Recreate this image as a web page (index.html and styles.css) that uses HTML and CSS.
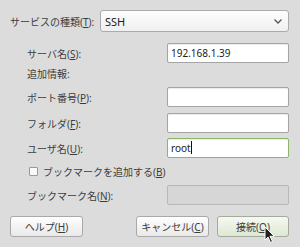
FILE: index.html
```html
<!DOCTYPE html>
<html lang="ja">
<head>
  <meta charset="UTF-8" />
  <title>サーバへ接続</title>
  <link rel="stylesheet" href="styles.css">
</head>
<body>
  <div class="dialog">
    <div class="row-type">
      <label class="type-label">サービスの種類(<u>T</u>):</label>
      <div class="combo">
        <span>SSH</span>
        <svg class="chevron" width="8" height="5" viewBox="0 0 8 5"><polyline points="0.5,0.5 4,4 7.5,0.5" fill="none" stroke="#555" stroke-width="1.3"/></svg>
      </div>
    </div>

    <div class="row row-server">
      <label>サーバ名(<u>S</u>):</label>
      <div class="entry">192.168.1.39</div>
    </div>

    <div class="row row-info">
      <label>追加情報:</label>
    </div>

    <div class="row row-port">
      <label>ポート番号(<u>P</u>):</label>
      <div class="entry"></div>
    </div>

    <div class="row row-folder">
      <label>フォルダ(<u>F</u>):</label>
      <div class="entry"></div>
    </div>

    <div class="row row-user">
      <label>ユーザ名(<u>U</u>):</label>
      <div class="entry focus">root<span class="caret"></span></div>
    </div>

    <div class="row row-check">
      <span class="checkbox"></span>
      <label>ブックマークを追加する(<u>B</u>)</label>
    </div>

    <div class="row row-bookmark">
      <label>ブックマーク名(<u>N</u>):</label>
      <div class="entry disabled"></div>
    </div>

    <div class="buttons">
      <button class="btn">ヘルプ(<u>H</u>)</button>
      <div class="spacer"></div>
      <button class="btn">キャンセル(<u>C</u>)</button>
      <button class="btn primary">接続(<u>O</u>)</button>
    </div>

    <svg class="pointer" width="12" height="18" viewBox="0 0 12 18">
      <path d="M1 1 L1 14 L4 11 L6.5 16.5 L8.5 15.5 L6 10.3 L10.3 10.3 Z" fill="#222" stroke="#fff" stroke-width="1" stroke-linejoin="round"/>
    </svg>
  </div>
</body>
</html>
```

FILE: styles.css
```css
body {
  margin: 0;
  background: #dcdcdc;
  font-family: "Noto Sans", "Noto Sans CJK JP", sans-serif;
  font-size: 10px;
  color: #3c3c3c;
}

u {
  text-decoration: underline;
  text-underline-offset: 1px;
}

.dialog {
  position: relative;
  width: 300px;
  height: 247px;
  box-sizing: border-box;
  padding: 10px 11px 0 10px;
}

.row-type {
  display: flex;
  align-items: center;
  height: 22px;
}

.type-label {
  width: 90px;
}

.combo {
  flex: 1;
  height: 22px;
  box-sizing: border-box;
  border: 1px solid #ababab;
  border-radius: 3px;
  background: linear-gradient(#fdfdfd, #f0f0f0);
  display: flex;
  align-items: center;
  justify-content: space-between;
  padding: 0 6px 0 4px;
  font-size: 11px;
  color: #222;
}

.chevron {
  margin-top: 1px;
}

.row {
  display: flex;
  align-items: center;
  padding-left: 17px;
  height: 20px;
}

.row label {
  width: 140px;
}

.row-server { margin-top: 11px; }
.row-info { margin-top: 2px; height: 16px; }
.row-port { margin-top: 6px; }
.row-folder { margin-top: 6px; }
.row-user { margin-top: 5px; }
.row-check { margin-top: 5px; height: 16px; padding-left: 19px; }
.row-bookmark { margin-top: 6px; }

.entry {
  width: 122px;
  height: 20px;
  box-sizing: border-box;
  border: 1px solid #a4a4a4;
  border-radius: 2px;
  background: #fff;
  box-shadow: inset 0 1px 1px rgba(0, 0, 0, 0.08);
  padding: 0 3px;
  line-height: 18px;
  color: #222;
}

.entry.focus {
  border-color: #8db56a;
}

.caret {
  display: inline-block;
  width: 1px;
  height: 13px;
  background: #111;
  vertical-align: -2px;
}

.entry.disabled {
  background: #d6d6d6;
  border-color: #b8b8b8;
  box-shadow: none;
}

.checkbox {
  width: 7px;
  height: 7px;
  border: 1px solid #9a9a9a;
  border-radius: 1px;
  background: #fafafa;
  margin-right: 5px;
}

.row-check label {
  width: auto;
}

.buttons {
  display: flex;
  margin-top: 11px;
  height: 21px;
}

.spacer {
  flex: 1;
}

.btn {
  width: 73px;
  height: 21px;
  margin: 0;
  padding: 0;
  border: 1px solid #a9a9a9;
  border-radius: 3px;
  background: linear-gradient(#fefefe, #e9e9e9);
  font-family: inherit;
  font-size: 10px;
  color: #3c3c3c;
}

.btn.primary {
  margin-left: 8px;
  width: 72px;
  background: linear-gradient(#f6f9f1, #dde8d2);
  border-color: #a3ab9c;
}

.pointer {
  position: absolute;
  left: 264px;
  top: 226px;
}
```
